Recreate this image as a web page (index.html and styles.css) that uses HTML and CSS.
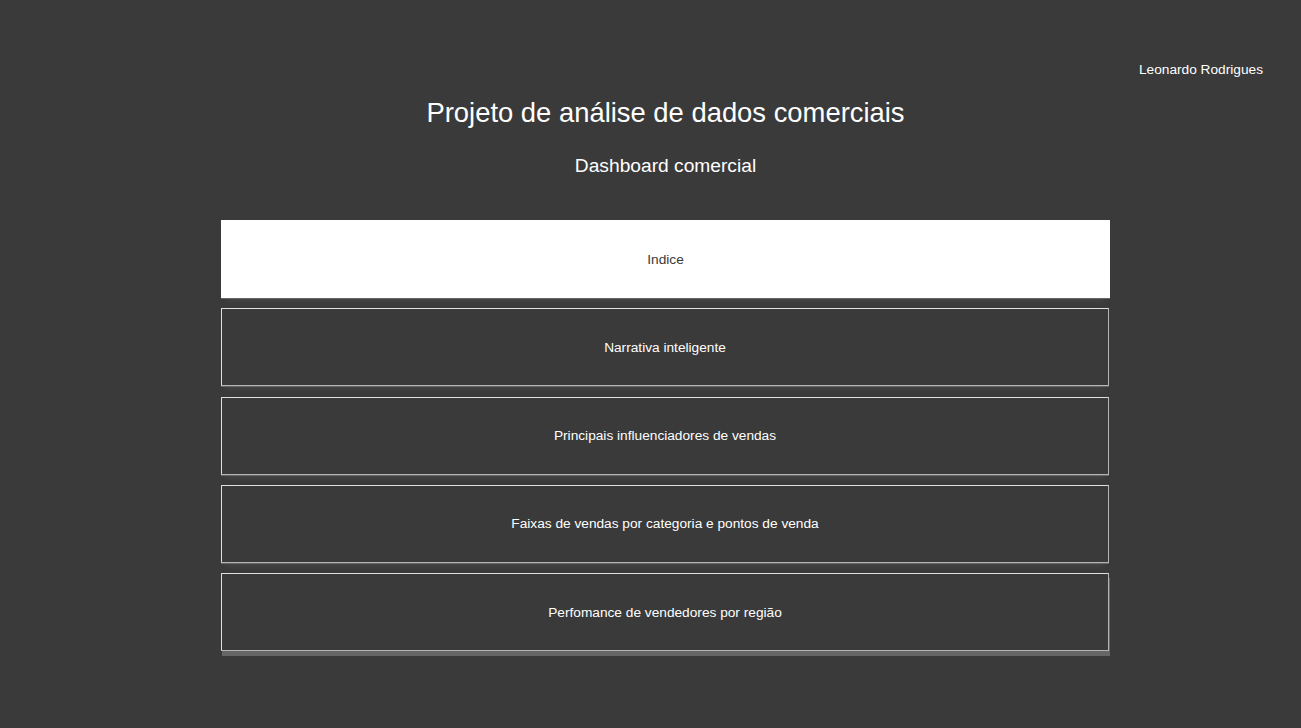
FILE: index.html
```
<!DOCTYPE html>
<html lang="pt-BR">
<head>
<meta charset="utf-8">
<title>Dashboard comercial</title>
<link rel="stylesheet" href="styles.css">
</head>
<body>
<div class="page">
  <header class="topbar">
    <span class="author">Leonardo Rodrigues</span>
  </header>
  <main class="main">
    <h1 class="title">Projeto de análise de dados comerciais</h1>
    <h2 class="subtitle">Dashboard comercial</h2>
    <nav class="menu">
      <a class="card card-active">Indice</a>
      <a class="card">Narrativa inteligente</a>
      <a class="card">Principais influenciadores de vendas</a>
      <a class="card">Faixas de vendas por categoria e pontos de venda</a>
      <a class="card card-last">Perfomance de vendedores por região</a>
    </nav>
  </main>
</div>
</body>
</html>
```
FILE: styles.css
```
html, body {
  margin: 0;
  padding: 0;
  background: #3a3a3a;
  font-family: "Liberation Sans", Arial, sans-serif;
  color: #ffffff;
}
.page {
  height: 728px;
  overflow: hidden;
}
.topbar {
  display: flex;
  justify-content: flex-end;
  padding: 62px 38px 0 0;
  height: 16px;
}
.author {
  font-size: 13.7px;
  line-height: 16px;
}
.main {
  display: flex;
  flex-direction: column;
  align-items: center;
  width: 889px;
  margin-left: 221px;
}
.title {
  margin: 19px 0 0;
  font-size: 27.4px;
  font-weight: normal;
  line-height: 32px;
}
.subtitle {
  margin: 26px 0 0;
  font-size: 19.2px;
  font-weight: normal;
  line-height: 22px;
}
.menu {
  display: flex;
  flex-direction: column;
  gap: 10.3px;
  width: 100%;
  margin-top: 43px;
}
.card {
  box-sizing: border-box;
  height: 78px;
  display: flex;
  align-items: center;
  justify-content: center;
  font-size: 13.7px;
  color: #ffffff;
  border: 1px solid #e0e0e0;
  border-right-color: #b4b4b4;
  border-bottom-color: #b4b4b4;
  box-shadow: 0 1px 0 #666666, 0 8px 6px -5px rgba(255, 255, 255, 0.07);
  margin-right: 1px;
}
.card-active {
  background: #ffffff;
  color: #3a3a3a;
  border-color: #ffffff;
  margin-right: 0;
}
.card-last {
  box-shadow: 1px 5px 0 #666666;
}
```
